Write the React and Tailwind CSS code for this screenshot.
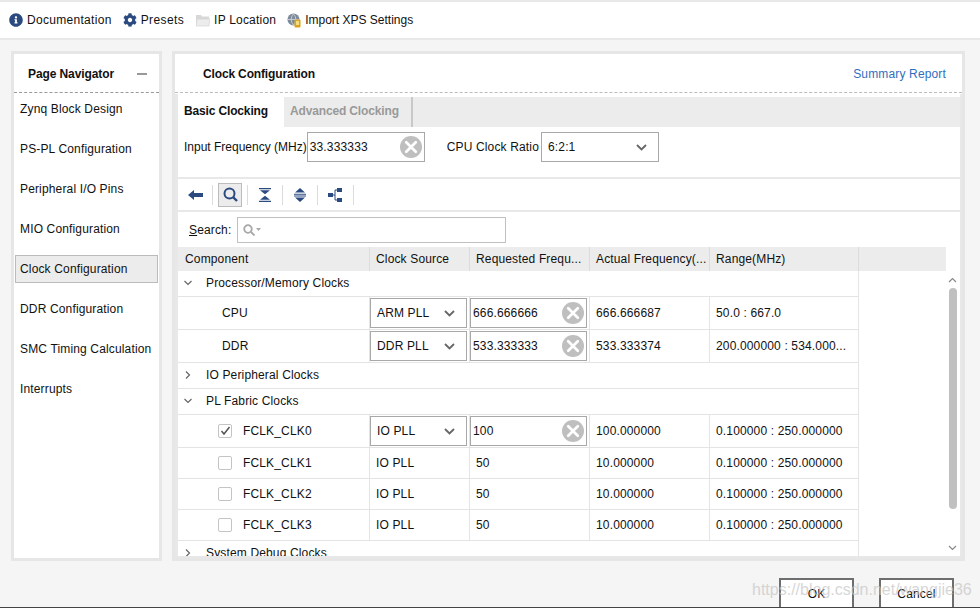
import React from "react";
import { FaInfoCircle, FaCog } from "react-icons/fa";

const Clear = ({ size = 22 }) => (
  <svg width={size} height={size} viewBox="0 0 23 23" className="shrink-0">
    <circle cx="11.5" cy="11.5" r="11.5" fill="#bfbfbf" />
    <path d="M6.5 6.5l10 10M16.5 6.5l-10 10" stroke="#fff" strokeWidth="2.8" strokeLinecap="round" />
  </svg>
);

const Chevron = () => (
  <svg width="11" height="7" viewBox="0 0 11 7" className="shrink-0">
    <path d="M1 1l4.5 4.5L10 1" fill="none" stroke="#666" strokeWidth="1.8" />
  </svg>
);

const Tree = ({ open }) => (
  <svg width="8" height="8" viewBox="0 0 8 8" className="shrink-0">
    {open ? (
      <path d="M.5 2l3.5 3.5L7.500 2" fill="none" stroke="#666" strokeWidth="1.2" />
    ) : (
      <path d="M2 .5L5.500 4 2 7.500" fill="none" stroke="#666" strokeWidth="1.2" />
    )}
  </svg>
);

const Folder = () => (
  <svg width="14" height="13" viewBox="0 0 14 13">
    <path d="M0 1h5l1 1.500h7V12H0z" fill="#d8d8d8" />
    <path d="M1 5h13l-1 7H0z" fill="#ececec" stroke="#d0d0d0" strokeWidth=".6" />
  </svg>
);

const Globe = () => (
  <svg width="15" height="15" viewBox="0 0 15 15">
    <circle cx="6.500" cy="6.500" r="6" fill="#7d8a99" />
    <path d="M1 6.500h11M6.500 1c-3 3-3 8 0 11M6.500 1c3 3 3 8 0 11" fill="none" stroke="#d5dbe2" strokeWidth=".8" />
    <rect x="7.500" y="6.500" width="6" height="8" rx="1" fill="#d9a520" />
    <rect x="9" y="8" width="3" height="4" fill="#f4dc7c" />
  </svg>
);

const ToolSep = () => <div className="w-px h-[20px] bg-[#dcdcdc]" />;

const Field = ({ w, value }) => (
  <div className={`${w} h-[30px] border border-[#a8a8a8] bg-white flex items-center justify-between pl-[2px] pr-[2px]`}>
    <span>{value}</span>
    <Clear />
  </div>
);

const Select = ({ value }) => (
  <div className="w-[97px] h-[30px] border border-[#a8a8a8] bg-white flex items-center justify-between pl-[6px] pr-[11px]">
    <span>{value}</span>
    <Chevron />
  </div>
);

const Cell = ({ w, children, className = "" }) => (
  <div className={`${w} shrink-0 h-full border-r border-[#e4e4e4] flex items-center ${className}`}>{children}</div>
);

const Group = ({ open, label }) => (
  <div className="h-[26px] w-[681px] border-b border-r border-[#e4e4e4] flex items-center pl-[6px] pb-[1px] gap-[14px] shrink-0">
    <Tree open={open} />
    <span>{label}</span>
  </div>
);

const Row = ({ name, src, req, actual, range, editable, check, checked, h }) => (
  <div className={`${h} w-[681px] border-b border-[#e4e4e4] flex shrink-0`}>
    <Cell w="w-[192px]" className={check ? "pl-[40px] gap-[11px]" : "pl-[44px]"}>
      {check && (
        <span className="w-[14px] h-[14px] border border-[#c4c4c4] rounded-[2px] bg-white flex items-center justify-center">
          {checked && (
            <svg width="11" height="10" viewBox="0 0 11 10">
              <path d="M1.500 5l2.500 3L9.500 1" fill="none" stroke="#555" strokeWidth="1.500" />
            </svg>
          )}
        </span>
      )}
      <span>{name}</span>
    </Cell>
    <Cell w="w-[100px]" className={editable ? "" : "pl-[6px]"}>
      {editable ? <Select value={src} /> : src}
    </Cell>
    <Cell w="w-[120px]" className={editable ? "" : "pl-[6px]"}>
      {editable ? <Field w="w-[117px]" value={req} /> : req}
    </Cell>
    <Cell w="w-[120px]" className="pl-[6px]">{actual}</Cell>
    <div className="w-[149px] h-full flex items-center pl-[6px] border-r border-[#e4e4e4]">{range}</div>
  </div>
);

const navItems = [
  "Zynq Block Design",
  "PS-PL Configuration",
  "Peripheral I/O Pins",
  "MIO Configuration",
  "Clock Configuration",
  "DDR Configuration",
  "SMC Timing Calculation",
  "Interrupts",
];

const headers = [
  ["w-[192px] pl-[7px]", "Component"],
  ["w-[100px] pl-[6px]", "Clock Source"],
  ["w-[120px] pl-[6px]", "Requested Frequ..."],
  ["w-[120px] pl-[6px]", "Actual Frequency(..."],
  ["w-[149px] pl-[6px]", "Range(MHz)"],
];

export default function App() {
  return (
    <div className="relative w-[980px] h-[608px] overflow-hidden bg-[#f5f5f5] text-[#111] text-[12px] leading-none tracking-[0.15px] flex flex-col border-b border-[#444]" style={{ fontFamily: '"Liberation Sans", Arial, sans-serif' }}>
      {/* top toolbar */}
      <div className="h-[40px] shrink-0 bg-white border-t-2 border-b-2 border-[#e8e8e8] flex items-center pl-[9px]">
        <div className="flex items-center gap-[4px] tracking-[0.3px]">
          <FaInfoCircle className="text-[#2b4a80]" size={14} />
          <span>Documentation</span>
        </div>
        <div className="flex items-center gap-[4px] ml-[11px] tracking-[0.4px]">
          <FaCog className="text-[#2b4a80]" size={14} />
          <span>Presets</span>
        </div>
        <div className="flex items-center gap-[4px] ml-[12px] tracking-[0.2px]">
          <Folder />
          <span>IP Location</span>
        </div>
        <div className="flex items-center gap-[3px] ml-[11px] tracking-normal">
          <Globe />
          <span>Import XPS Settings</span>
        </div>
      </div>

      {/* main */}
      <div className="flex pl-[11px] pt-[11px] gap-[10px]">
        <aside className="w-[151px] h-[510px] border-[3px] border-[#e6e6e6] bg-white">
          <div className="h-[39px] border-b border-dashed border-[#999] flex items-center justify-between pl-[14px] pr-[12px] pt-[2px]">
            <span className="font-bold tracking-[-0.1px]">Page Navigator</span>
            <span className="w-[10px] h-[2px] bg-[#999]" />
          </div>
          <div className="flex flex-col pt-[2px] pl-[1px] pr-[1px]">
            {navItems.map((n) => (
              <div
                key={n}
                className={
                  n === "Clock Configuration"
                    ? "h-[28px] mb-[12px] flex items-center pl-[4px] bg-[#ececec] border border-[#bbb]"
                    : "h-[28px] mb-[12px] flex items-center pl-[5px]"
                }
              >
                {n}
              </div>
            ))}
          </div>
        </aside>

        <section className="w-[793px] h-[510px] border-[3px] border-[#e6e6e6] bg-white flex flex-col">
          <div className="h-[39px] shrink-0 border-b border-dashed border-[#bbb] flex items-center justify-between pl-[28px] pr-[16px] pt-[2px]">
            <span className="font-bold tracking-[-0.15px]">Clock Configuration</span>
            <span className="text-[#2f6fbe]">Summary Report</span>
          </div>
          <div className="flex-1 min-h-0 border-l-[3px] border-r-2 border-b-2 border-[#e8e8e8] flex flex-col mt-[1px]">
            {/* tabs */}
            <div className="h-[33px] shrink-0 pt-[3px] bg-white">
              <div className="h-[30px] bg-[#ececec] flex items-stretch font-bold tracking-[-0.15px]">
                <div className="w-[106px] bg-white flex items-center pl-[6px] pb-[3px]">Basic Clocking</div>
                <div className="w-[129px] flex items-center pl-[6px] pb-[3px] text-[#999] border-r-2 border-[#c8c8c8]">Advanced Clocking</div>
              </div>
            </div>
            {/* freq */}
            <div className="h-[52px] shrink-0 border-b-2 border-[#e8e8e8] flex items-start pt-[5px] pl-[6px]">
              <div className="flex items-center h-[30px]">
                <span className="tracking-normal">Input Frequency (MHz)</span>
                <Field w="w-[118px]" value="33.333333" />
              </div>
              <div className="flex items-center h-[30px] ml-[22px]">
                <span className="mr-[2px]">CPU Clock Ratio</span>
                <div className="w-[118px] h-[30px] border border-[#a8a8a8] flex items-center justify-between pl-[6px] pr-[11px]">
                  <span>6:2:1</span>
                  <Chevron />
                </div>
              </div>
            </div>
            {/* tools */}
            <div className="h-[33px] shrink-0 border-b-2 border-[#e8e8e8] flex items-center pl-[10px] gap-[5px]">
              <svg width="15" height="10" viewBox="0 0 15 10" className="mr-[4px]">
                <path d="M0 5l6-5v3h9v4H6v3z" fill="#2b4a80" />
              </svg>
              <ToolSep />
              <div className="w-[24px] h-[24px] bg-[#ececec] border border-[#bcbcbc] flex items-center justify-center">
                <svg width="15" height="15" viewBox="0 0 15 15">
                  <circle cx="6.500" cy="6.500" r="5" fill="none" stroke="#2b4a80" strokeWidth="2" />
                  <path d="M10 10l4 4" stroke="#2b4a80" strokeWidth="2.400" />
                </svg>
              </div>
              <ToolSep />
              <svg width="12" height="14" viewBox="0 0 12 14" className="mx-[6px]">
                <path d="M0 0h12v1.300H0zM1 2.300h10L6 6.300zM6 7.700l5 4H1zM0 12.700h12V14H0z" fill="#2b4a80" />
              </svg>
              <ToolSep />
              <svg width="12" height="14" viewBox="0 0 12 14" className="mx-[6px]">
                <path d="M6 0l5 4.500H1zM0 5.800h12v1H0zM0 7.600h12v1H0zM1 9.500h10L6 14z" fill="#2b4a80" />
              </svg>
              <ToolSep />
              <svg width="15" height="14" viewBox="0 0 15 14" className="mx-[5px]">
                <path d="M0 5h5v4H0zM9 0h5v4H9zM9 10h5v4H9z" fill="#2b4a80" />
                <path d="M5 7h2M7 2v10M7 2h2M7 12h2" stroke="#2b4a80" fill="none" />
              </svg>
              <ToolSep />
            </div>
            {/* search */}
            <div className="h-[35px] shrink-0 flex items-center pl-[11px]">
              <span className="w-[48px]"><span className="underline">S</span>earch:</span>
              <div className="w-[269px] h-[26px] border border-[#c0c0c0] flex items-center pl-[5px] gap-[1px]">
                <svg width="12" height="12" viewBox="0 0 12 12">
                  <circle cx="5" cy="5" r="3.800" fill="none" stroke="#a8a8a8" strokeWidth="1.800" />
                  <path d="M8 8l3.500 3.500" stroke="#a8a8a8" strokeWidth="1.800" />
                </svg>
                <svg width="5" height="3" viewBox="0 0 5 3"><path d="M0 0h5L2.500 3z" fill="#a8a8a8" /></svg>
              </div>
            </div>
            {/* table */}
            <div className="relative flex-1 min-h-0 overflow-hidden">
              <div className="h-[24px] w-[768px] bg-[#ececec] flex">
                {headers.map(([w, t]) => (
                  <div key={t} className={`${w} h-full border-r border-[#dcdcdc] flex items-center`}>{t}</div>
                ))}
              </div>
              <div className="flex flex-col">
                <Group open label="Processor/Memory Clocks" />
                <Row h="h-[33px]" name="CPU" src="ARM PLL" req="666.666666" actual="666.666687" range="50.0 : 667.0" editable />
                <Row h="h-[33px]" name="DDR" src="DDR PLL" req="533.333333" actual="533.333374" range="200.000000 : 534.000..." editable />
                <Group label="IO Peripheral Clocks" />
                <Group open label="PL Fabric Clocks" />
                <Row h="h-[33px]" name="FCLK_CLK0" src="IO PLL" req="100" actual="100.000000" range="0.100000 : 250.000000" editable check checked />
                <Row h="h-[31px]" name="FCLK_CLK1" src="IO PLL" req="50" actual="10.000000" range="0.100000 : 250.000000" check />
                <Row h="h-[31px]" name="FCLK_CLK2" src="IO PLL" req="50" actual="10.000000" range="0.100000 : 250.000000" check />
                <Row h="h-[31px]" name="FCLK_CLK3" src="IO PLL" req="50" actual="10.000000" range="0.100000 : 250.000000" check />
                <div className="h-[24px] w-[681px] flex items-center pl-[6px] gap-[14px] border-r border-[#e4e4e4]">
                  <Tree />
                  <span>System Debug Clocks</span>
                </div>
              </div>
              {/* scrollbar */}
              <div className="absolute right-0 top-[24px] bottom-0 w-[15px] flex flex-col items-center">
                <svg width="9" height="6" viewBox="0 0 9 6" className="mt-[6px]"><path d="M1 5l3.500-3.500L8 5" fill="none" stroke="#888" strokeWidth="1.200" /></svg>
                <div className="w-[8px] h-[221px] rounded-[4px] bg-[#c0c0c0] mt-[5px]" />
                <svg width="9" height="6" viewBox="0 0 9 6" className="mt-[36px]"><path d="M1 1l3.500 3.500L8 1" fill="none" stroke="#888" strokeWidth="1.200" /></svg>
              </div>
            </div>
          </div>
        </section>
      </div>

      {/* footer */}
      <div className="flex-1 flex items-end justify-end gap-[25px] pr-[26px]">
        <button className="w-[75px] h-[29px] border-2 border-b-0 border-[#6e6e6e] bg-white text-[12px]">OK</button>
        <button className="w-[75px] h-[29px] border-2 border-b-0 border-[#6e6e6e] bg-white text-[12px]">Cancel</button>
      </div>

      {/* watermark */}
      <div className="absolute left-[752px] top-[582px] text-[16px] tracking-normal text-[#c4c4c4]/70 whitespace-nowrap pointer-events-none">
        https://blog.csdn.net/wangjie36
      </div>
    </div>
  );
}
